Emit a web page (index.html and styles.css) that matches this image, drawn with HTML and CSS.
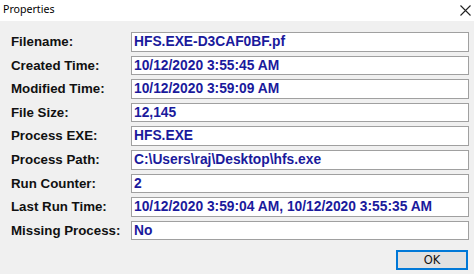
FILE: index.html
```html
<!DOCTYPE html>
<html>
<head>
<meta charset="utf-8">
<link rel="stylesheet" href="styles.css">
</head>
<body>
<div class="dialog">
  <div class="titlebar">
    <span class="title">Properties</span>
    <svg class="close" width="11" height="11" viewBox="0 0 11 11"><path d="M0.5 0.5L10.5 10.5M10.5 0.5L0.5 10.5" stroke="#222" stroke-width="1.1" fill="none"/></svg>
  </div>
  <div class="content">
    <div class="grid">
      <div class="label">Filename:</div><div class="value">HFS.EXE-D3CAF0BF.pf</div>
      <div class="label">Created Time:</div><div class="value">10/12/2020 3:55:45 AM</div>
      <div class="label">Modified Time:</div><div class="value">10/12/2020 3:59:09 AM</div>
      <div class="label">File Size:</div><div class="value">12,145</div>
      <div class="label">Process EXE:</div><div class="value">HFS.EXE</div>
      <div class="label">Process Path:</div><div class="value">C:\Users\raj\Desktop\hfs.exe</div>
      <div class="label">Run Counter:</div><div class="value">2</div>
      <div class="label">Last Run Time:</div><div class="value">10/12/2020 3:59:04 AM, 10/12/2020 3:55:35 AM</div>
      <div class="label">Missing Process:</div><div class="value">No</div>
    </div>
    <div class="buttons">
      <button class="ok">OK</button>
    </div>
  </div>
</div>
</body>
</html>
```
FILE: styles.css
```css
html, body {
  margin: 0;
  padding: 0;
  width: 474px;
  height: 274px;
  overflow: hidden;
}
.dialog {
  width: 474px;
  height: 274px;
  display: flex;
  flex-direction: column;
  background: #f0f0f0;
}
.titlebar {
  height: 21px;
  background: #ffffff;
  display: flex;
  align-items: center;
  justify-content: space-between;
  padding: 0 3px 0 3px;
  flex-shrink: 0;
}
.title {
  font-family: "Noto Sans", "DejaVu Sans", sans-serif;
  font-size: 10.6px;
  color: #000;
  margin-top: -3px;
}
.close {
  margin-top: -1px;
}
.content {
  flex: 1;
  padding: 11px 5px 0 11px;
  display: flex;
  flex-direction: column;
}
.grid {
  display: grid;
  grid-template-columns: 120px 1fr;
  grid-auto-rows: 19.6px;
  row-gap: 4px;
}
.label {
  font-family: "Liberation Sans", Arial, sans-serif;
  font-weight: bold;
  font-size: 13.3px;
  color: #111;
  line-height: 19.6px;
}
.value {
  font-family: "Liberation Sans", Arial, sans-serif;
  font-weight: bold;
  font-size: 13.8px;
  color: #1a1a9c;
  background: #ffffff;
  border: 1px solid #a0a0a0;
  line-height: 17.6px;
  padding-left: 2px;
  white-space: nowrap;
  overflow: hidden;
}
.buttons {
  display: flex;
  justify-content: flex-end;
  margin-top: 10px;
  padding-right: 1px;
}
.ok {
  width: 72px;
  height: 20px;
  background: #e1e1e1;
  border: 2px solid #0078d7;
  font-family: "DejaVu Sans", sans-serif;
  font-size: 11.5px;
  color: #111;
  padding: 0;
  margin: 0;
}
```
